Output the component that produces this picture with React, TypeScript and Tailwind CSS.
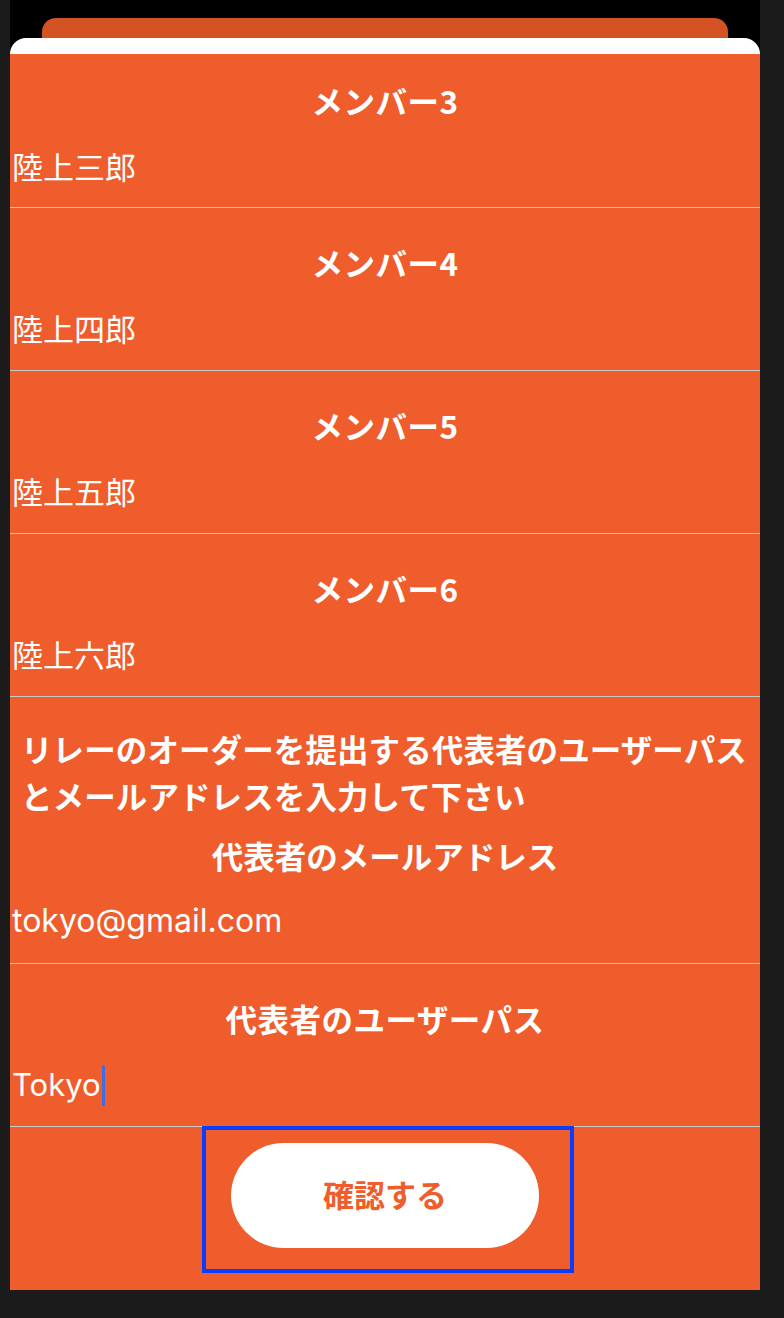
import React from "react";

const jp = "font-['Noto_Sans_CJK_JP',sans-serif]";
const latin = "font-['Inter','Noto_Sans_CJK_JP',sans-serif]";

type Member = { label: string; name: string };

const members: Member[] = [
  { label: "メンバー4", name: "陸上四郎" },
  { label: "メンバー5", name: "陸上五郎" },
  { label: "メンバー6", name: "陸上六郎" },
];

function Field({
  label,
  children,
  first,
}: {
  label: string;
  children: React.ReactNode;
  first?: boolean;
}) {
  return (
    <div
      className={`border-b border-[#c9c9c9] ${
        first ? "pt-[26px] pb-[21px]" : "pt-[34px] pb-[22px]"
      }`}
    >
      <h3 className={`${jp} h-[40px] leading-[40px] text-center text-[31.5px] font-bold tracking-[0.5px] text-white`}>
        {label}
      </h3>
      <div className="mt-[26px] h-[40px] leading-[40px] pl-[2px] text-[31px] text-white">
        {children}
      </div>
    </div>
  );
}

export default function App() {
  return (
    <div className="min-h-[1318px] bg-[#1b1b1b]">
      <div className="ml-[10px] w-[750px] bg-black pt-[18px]">
        {/* card behind */}
        <div className="mx-[32px] h-[20px] rounded-t-[14px] bg-[#d35325]" />

        {/* sheet */}
        <div className="rounded-t-[16px] bg-white pt-[16px]">
          <div className="bg-[#ee5d2b]">
            <Field label="メンバー3" first>
              <span className={jp}>陸上三郎</span>
            </Field>
            {members.map((m) => (
              <Field key={m.label} label={m.label}>
                <span className={jp}>{m.name}</span>
              </Field>
            ))}

            {/* representative */}
            <div className="border-b border-[#c9c9c9] pt-[28px] pb-[22px]">
              <p className={`${jp} px-[11px] text-[31.5px] font-bold leading-[47px] tracking-[0.1px] text-white`}>
                リレーのオーダーを提出する代表者のユーザーパス
                <br />
                とメールアドレスを入力して下さい
              </p>
              <h3 className={`${jp} mt-[16px] h-[40px] leading-[40px] text-center text-[31.5px] font-bold text-white`}>
                代表者のメールアドレス
              </h3>
              <div className={`${latin} mt-[26px] h-[40px] leading-[40px] pl-[2px] text-[32px] text-white`}>
                tokyo@gmail.com
              </div>
            </div>

            <Field label="代表者のユーザーパス">
              <span className={`${latin} inline-flex items-center`}>
                Tokyo
                <span className="ml-[1px] inline-block h-[41px] w-[3px] rounded-full bg-[#3d6fe3]" />
              </span>
            </Field>

            {/* submit */}
            <div className="relative h-[163px] pt-[16px]">
              <div className="flex justify-center">
                <button
                  className={`${jp} h-[105px] w-[308px] rounded-full bg-white pb-[3px] text-[31px] font-bold text-[#ee5d2b]`}
                >
                  確認する
                </button>
              </div>
              <div className="pointer-events-none absolute left-[192px] top-[-1px] h-[147px] w-[372px] border-[4px] border-[#0a3dff]" />
            </div>
          </div>
        </div>
      </div>
    </div>
  );
}
